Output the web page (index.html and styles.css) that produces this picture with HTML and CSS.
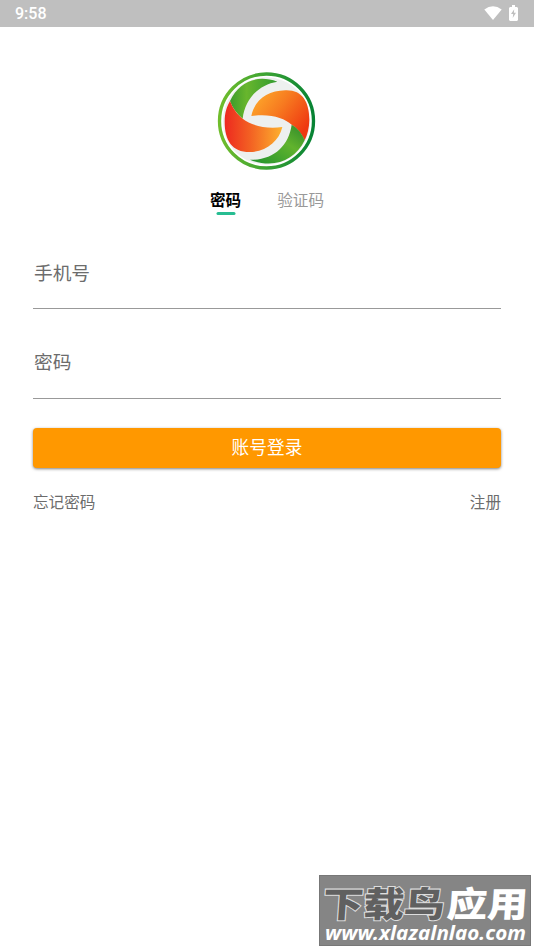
FILE: index.html
```html
<!DOCTYPE html>
<html lang="zh-CN">
<head>
<meta charset="utf-8">
<title>登录</title>
<link rel="stylesheet" href="styles.css">
</head>
<body>
<header class="status">
  <span class="time">9:58</span>
  <span class="status-icons">
    <svg width="18" height="14" viewBox="0 0 18 14"><path d="M.3 3.500Q9-3.200 17.700 3.500L9 14Z" fill="#fff"/></svg>
    <svg width="9" height="16" viewBox="0 0 9 16"><path d="M1 2h2V0h3v2h2l1 1v12l-1 1H1l-1-1V3Z" fill="#fff"/><path d="M5.200 4.200 2 9h2.200L3.700 13 7 7.800H4.900Z" fill="#bfbfbf"/></svg>
  </span>
</header>
<main class="login">
  <svg class="logo" width="112" height="112" viewBox="0 0 336 336">
    <defs>
      <linearGradient id="ring"><stop offset="0" stop-color="#70bd2c"/><stop offset=".55" stop-color="#36a034"/><stop offset="1" stop-color="#078334"/></linearGradient>
      <linearGradient id="leaf" x1="0" x2="1"><stop offset="0" stop-color="#3c9c2c"/><stop offset=".35" stop-color="#68b62d"/><stop offset="1" stop-color="#319b2f"/></linearGradient>
      <linearGradient id="leaf2" x1="0" x2="1" y1="1" y2="0"><stop offset="0" stop-color="#1e922d"/><stop offset=".6" stop-color="#61b32d"/><stop offset="1" stop-color="#2d882b"/></linearGradient>
      <linearGradient id="red"><stop offset="0" stop-color="#ed291f"/><stop offset=".45" stop-color="#f36223"/><stop offset="1" stop-color="#fdb12e"/></linearGradient>
      <linearGradient id="orange" x1="0" y1="0" x2="1" y2=".65"><stop offset="0" stop-color="#ffb22d"/><stop offset=".5" stop-color="#f77b20"/><stop offset="1" stop-color="#ef3811"/></linearGradient>
    </defs>
    <circle cx="169.500" cy="168" r="141" fill="#fff" stroke="url(#ring)" stroke-width="10"/>
    <circle cx="169.500" cy="168" r="131" fill="#edf0ef"/>
    <path d="M60 108C87 50 141 28 202 50C147 58 105 102 98 161C80 147 67 128 60 108Z" fill="url(#leaf)"/>
    <path d="M124 153C132 107 172 77 226 76C276 74 298 110 298 164C298 188 292 209 284 226C274 203 260 189 245 179C222 158 180 145 124 153Z" fill="url(#orange)"/>
    <path d="M60 108C69 132 81 147 98 161C124 181 166 193 217 186C207 229 168 261 119 261C66 261 44 226 44 170C44 144 50 125 60 108Z" fill="url(#red)"/>
    <path d="M245 179C264 190 277 207 284 226C255 286 191 313 120 284C189 286 236 244 245 179Z" fill="url(#leaf2)"/>
  </svg>
  <nav class="tabs"><span class="tab active">密码</span><span class="tab">验证码</span></nav>
  <div class="field">手机号</div>
  <div class="field">密码</div>
  <button class="submit">账号登录</button>
  <div class="links"><span>忘记密码</span><span>注册</span></div>
</main>
<aside class="watermark">
  <svg width="212" height="71" viewBox="0 0 212 71">
    <g class="brand"><text class="brand-dark" x="3" y="42" textLength="122" lengthAdjust="spacingAndGlyphs">下载鸟</text><text class="brand-light" x="127" y="42" textLength="81" lengthAdjust="spacingAndGlyphs">应用</text></g>
    <text class="site" x="6" y="65" textLength="201" lengthAdjust="spacingAndGlyphs">www.xlazalnlao.com</text>
  </svg>
</aside>
</body>
</html>
```
FILE: styles.css
```css
* { box-sizing: border-box; }
body {
  margin: 0;
  height: 950px;
  display: flex;
  flex-direction: column;
  overflow: hidden;
  background: #fff;
  color: #6c6c6c;
  font-family: Roboto, "Noto Sans CJK SC", sans-serif;
}
svg { display: block; }
.status {
  height: 27px;
  flex: none;
  display: flex;
  justify-content: space-between;
  padding: 0 16px 0 15px;
  background: #bfbfbf;
  color: #fff;
}
.time { font-size: 16px; line-height: 28px; font-weight: 500; }
.status-icons { display: flex; gap: 7px; padding-top: 5px; }
.status-icons svg:first-child { margin-top: 1px; }
.login { display: flex; flex-direction: column; padding: 38px 33px 0; }
.logo { margin-left: 177px; }
.tabs { display: flex; gap: 36px; height: 37px; margin: 12px 0 0 177px; }
.tab { font-size: 15.600px; line-height: 24px; color: #999; font-weight: 400; }
.active { color: #000; font-weight: 700; }
.active::after {
  content: "";
  display: block;
  width: 19px;
  height: 3px;
  margin: -1.500px auto 0;
  transform: translateX(.5px);
  border-radius: 2px;
  background: #27bd92;
}
.field {
  height: 90px;
  padding: 40px 0 0 1px;
  border-bottom: 1px solid #999;
  font-size: 18.700px;
  line-height: 28px;
  font-weight: 400;
}
.tabs + .field { height: 83px; padding-top: 34px; }
.submit {
  height: 40px;
  margin-top: 29px;
  padding: 0;
  border: 0;
  border-radius: 4px;
  background: #ff9800;
  box-shadow: 0 1px 3px rgba(0, 0, 0, .5);
  color: #fff;
  font: 400 17.700px/36px Roboto, "Noto Sans CJK SC", sans-serif;
}
.links {
  display: flex;
  justify-content: space-between;
  margin-top: 23px;
  font-size: 15.600px;
  line-height: 24px;
  font-weight: 400;
}
.watermark {
  width: 212px;
  height: 71px;
  margin: auto 3px 4px auto;
  background: #858585;
  box-shadow: inset 0 0 0 1px #777;
}
.brand { font: 900 35px "Noto Sans CJK SC", sans-serif; }
.brand text { transform: skewX(-4deg); transform-origin: 0 42px; }
.brand-dark { fill: #606060; stroke: #ddd; stroke-width: 2px; paint-order: stroke; }
.brand-light { fill: #fff; }
.site { font: italic 700 20px "Noto Sans", sans-serif; fill: #fff; }
```
